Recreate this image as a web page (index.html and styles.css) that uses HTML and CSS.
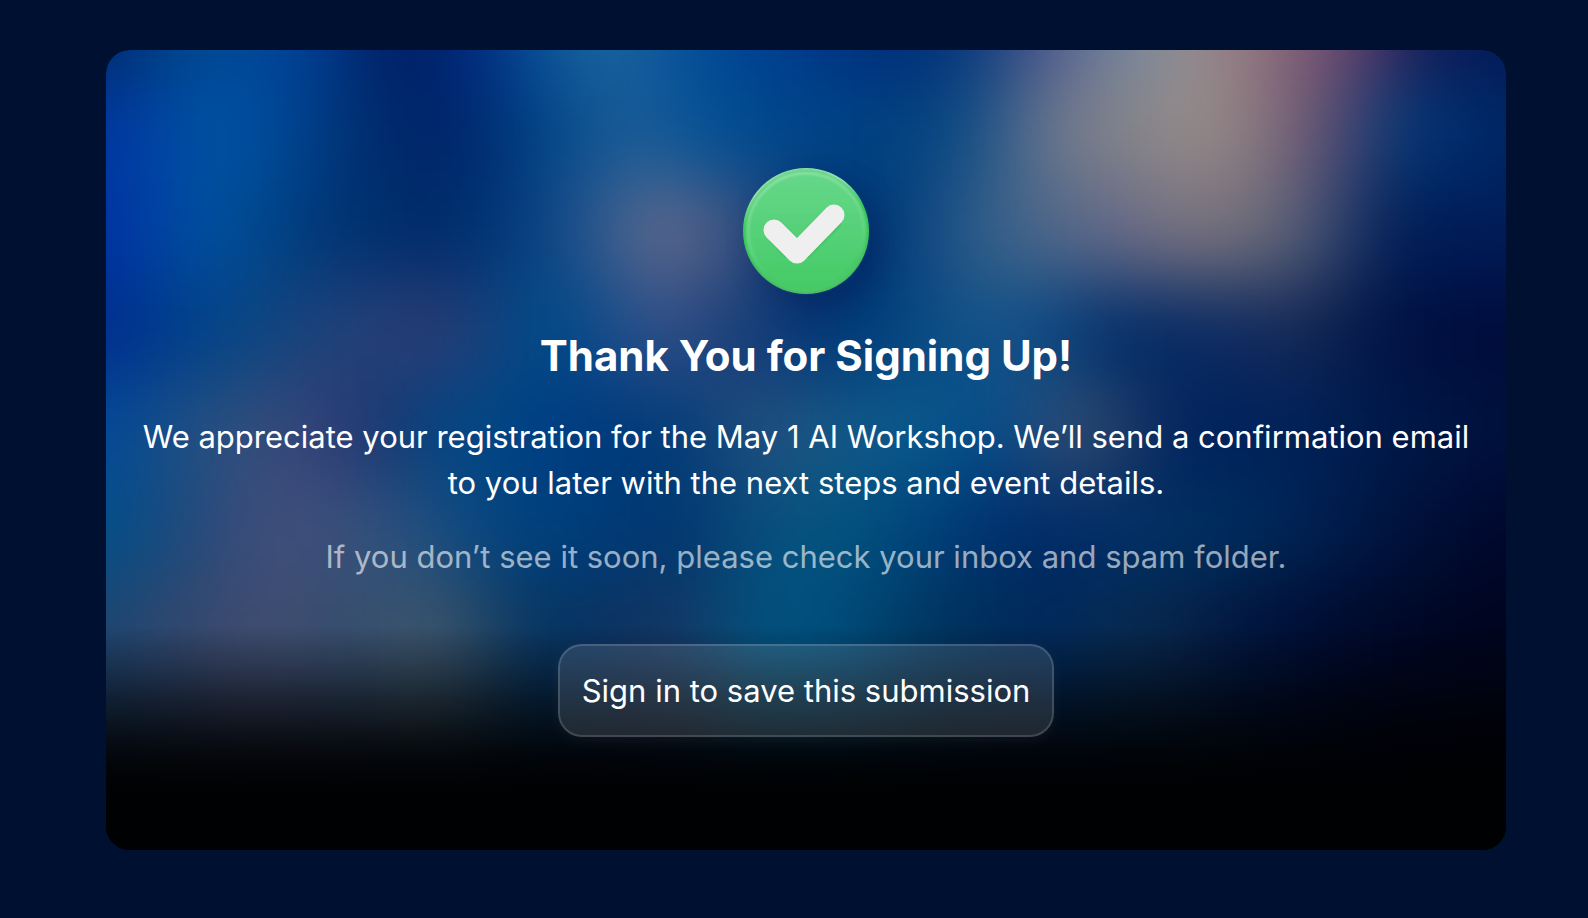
FILE: index.html
```html
<!DOCTYPE html>
<html lang="en">
<head>
  <meta charset="UTF-8" />
  <meta name="viewport" content="width=device-width, initial-scale=1.0"/>
  <title>Thank You for Signing Up!</title>
  <link rel="stylesheet" href="styles.css">
</head>
<body>

  <main class="card">
    <div class="backdrop" aria-hidden="true">
      <div class="band band-1"></div>
      <div class="band band-2"></div>
      <div class="band band-3"></div>
      <div class="band band-4"></div>
      <div class="band band-5"></div>
      <div class="band band-6"></div>
      <div class="band band-7"></div>
      <div class="band band-8"></div>
    </div>

    <svg class="check-icon" viewBox="0 0 128 128" aria-hidden="true">
      <defs>
        <linearGradient id="face" x1="0" y1="0" x2="0" y2="1">
          <stop offset="0" stop-color="#66d78a"/>
          <stop offset="1" stop-color="#45cb66"/>
        </linearGradient>
        <linearGradient id="rim" x1="0.3" y1="0" x2="0.5" y2="1">
          <stop offset="0" stop-color="#8fe3aa"/>
          <stop offset="0.6" stop-color="#62d481"/>
          <stop offset="0.85" stop-color="#48c866"/>
        </linearGradient>
        <linearGradient id="edge" x1="0.1" y1="0" x2="0.3" y2="1">
          <stop offset="0" stop-color="#7fdc9c"/>
          <stop offset="0.2" stop-color="#a4e4bc"/>
          <stop offset="0.45" stop-color="#2ccb55"/>
          <stop offset="1" stop-color="#4cb862"/>
        </linearGradient>
        <filter id="soft" x="-10%" y="-10%" width="120%" height="120%">
          <feGaussianBlur stdDeviation="1"/>
        </filter>
      </defs>
      <circle cx="64" cy="64" r="63" fill="url(#edge)"/>
      <circle cx="64" cy="64" r="61" fill="#4bcb6b" filter="url(#soft)"/>
      <circle cx="64" cy="64" r="58" fill="url(#face)" stroke="url(#rim)" stroke-width="3" filter="url(#soft)"/>
      <path d="M33 64 55 87 93 49" fill="none" stroke="#2fa950" stroke-opacity="0.5" stroke-width="21" stroke-linecap="round" stroke-linejoin="round" filter="url(#soft)"/>
      <path d="M32 63 55 86 92 48" fill="none" stroke="#eeefee" stroke-width="21" stroke-linecap="round" stroke-linejoin="round"/>
    </svg>

    <h1 class="title">Thank You for Signing Up!</h1>
    <p class="message">We appreciate your registration for the May 1 AI Workshop. We’ll send a confirmation email to you later with the next steps and event details.</p>
    <p class="message hint">If you don’t see it soon, please check your inbox and spam folder.</p>

    <button type="button" class="sign-in">Sign in to save this submission</button>
  </main>

</body>
</html>
```
FILE: styles.css
```css
body {
  margin: 0;
  padding: 50px 82px 68px 106px;
  background-color: #001030;
  color: #ffffff;
  font-family: Inter, "Liberation Sans", sans-serif;
}

.card {
  position: relative;
  display: flex;
  flex-direction: column;
  align-items: center;
  padding: 117px 32px 113px;
  border-radius: 24px;
  overflow: hidden;
  isolation: isolate;
  text-align: center;
  background-color: #000000;
}

/* Fade to black at the bottom of the card */
.card::before {
  content: "";
  position: absolute;
  inset: 0;
  z-index: -1;
  background: linear-gradient(180deg, transparent 72%, rgba(0, 0, 0, 0.5) 81%, #000103 94%);
}

/* Blurred colour bands behind the content */
.backdrop {
  position: absolute;
  inset: -190px -100px -110px;
  z-index: -2;
  display: grid;
  grid-template-rows: 22fr repeat(5, 10fr) 17fr 21fr;
  filter: blur(38px);
}

.band-1 {
  background: linear-gradient(90deg, #002868 6%, #004b92 12%, #00419a 19%, #001a5a 24%, #002c86 30%, #0c5c9c 34%, #2068a0 38%, #004b98 43%, #00388c 50%, #002a74 56%, #00387c 60%, #50548a 65%, #748ca2 70%, #9c8e8c 75%, #8c6a78 79%, #6c466e 84%, #141a56 88%, #001a56 94%);
}

.band-2 {
  background: linear-gradient(90deg, #0034a0 6%, #0056a4 13%, #00489a 17%, #003474 21%, #002468 25%, #00266c 29%, #00488a 34%, #1e5e98 39%, #005094 44%, #004488 50%, #00407e 56%, #145086 61%, #70788e 65%, #848488 70%, #9a8e8a 75%, #84707a 79%, #584670 83%, #003a76 87%, #002e70 91%, #002460 94%);
}

.band-3 {
  background: linear-gradient(90deg, #0030a4 6%, #0054a0 13%, #003c7c 18%, #002e6c 23%, #002a68 28%, #003c80 32%, #28588e 37%, #70708c 41%, #3c5482 45%, #00306e 51%, #003c7c 56%, #2c5c8a 60%, #4e6888 65%, #64688a 69%, #7c747e 74%, #706e7a 78%, #465474 82%, #001e58 86%, #001c58 90%, #001c58 94%);
}

.band-4 {
  background: linear-gradient(90deg, #002c8e 6%, #004688 13%, #1c4278 19%, #28407a 24%, #2c386e 28%, #004c88 32%, #004688 36%, #38548c 40%, #183c76 46%, #003474 51%, #00407c 55%, #145488 60%, #10508a 64%, #002c68 69%, #0c2a62 76%, #182c58 80%, #001446 86%, #000c3c 90%, #000c3c 94%);
}

.band-5 {
  background: linear-gradient(90deg, #00489a 6%, #1c5084 11%, #384e78 16%, #343e78 20%, #14346e 24%, #004c88 28%, #003c82 34%, #003a76 42%, #28507e 47%, #105a88 53%, #0a5a8c 57%, #00488a 62%, #3a5074 66%, #284468 69%, #00205e 73%, #00225a 80%, #001a4a 86%, #00103c 94%);
}

.band-6 {
  background: linear-gradient(90deg, #00508a 6%, #1c487a 11%, #444e7c 16%, #38507a 22%, #205080 26%, #00427e 31%, #003e7c 36%, #00346c 42%, #0a5280 48%, #00547e 52%, #003c78 59%, #002866 64%, #003068 70%, #002e5c 77%, #001c4e 83%, #001038 88%, #00062c 94%);
}

.band-7 {
  background: linear-gradient(90deg, #1c4470 6%, #38486c 12%, #424e70 17%, #304c6c 22%, #44586c 26%, #385064 28%, #003260 33%, #183460 42%, #005480 47%, #004c7c 52%, #003058 59%, #00285a 65%, #0a2a4c 71%, #00123c 78%, #000828 85%, #00041c 94%);
}

.band-8 {
  background-color: #000103;
}

.check-icon {
  width: 128px;
  height: 128px;
  margin-bottom: 35px;
  border-radius: 50%;
  box-shadow: 12px 14px 28px rgba(0, 16, 72, 0.3);
}

.title {
  margin: 0 0 32px;
  font-size: 42px;
  line-height: 52px;
  font-weight: 700;
}

.message {
  margin: 0 0 28px;
  font-size: 31px;
  line-height: 46px;
}

.hint {
  margin-bottom: 64px;
  color: rgba(255, 255, 255, 0.6);
}

.sign-in {
  padding: 22px 22px 21px;
  border: 2px solid rgba(255, 255, 255, 0.15);
  border-radius: 24px;
  background-color: rgba(255, 255, 255, 0.12);
  box-shadow: 0 4px 16px rgba(255, 255, 255, 0.05);
  color: #ffffff;
  font: inherit;
  font-size: 31px;
  line-height: 46px;
  cursor: pointer;
}

.sign-in:hover {
  background-color: rgba(255, 255, 255, 0.18);
}
```
